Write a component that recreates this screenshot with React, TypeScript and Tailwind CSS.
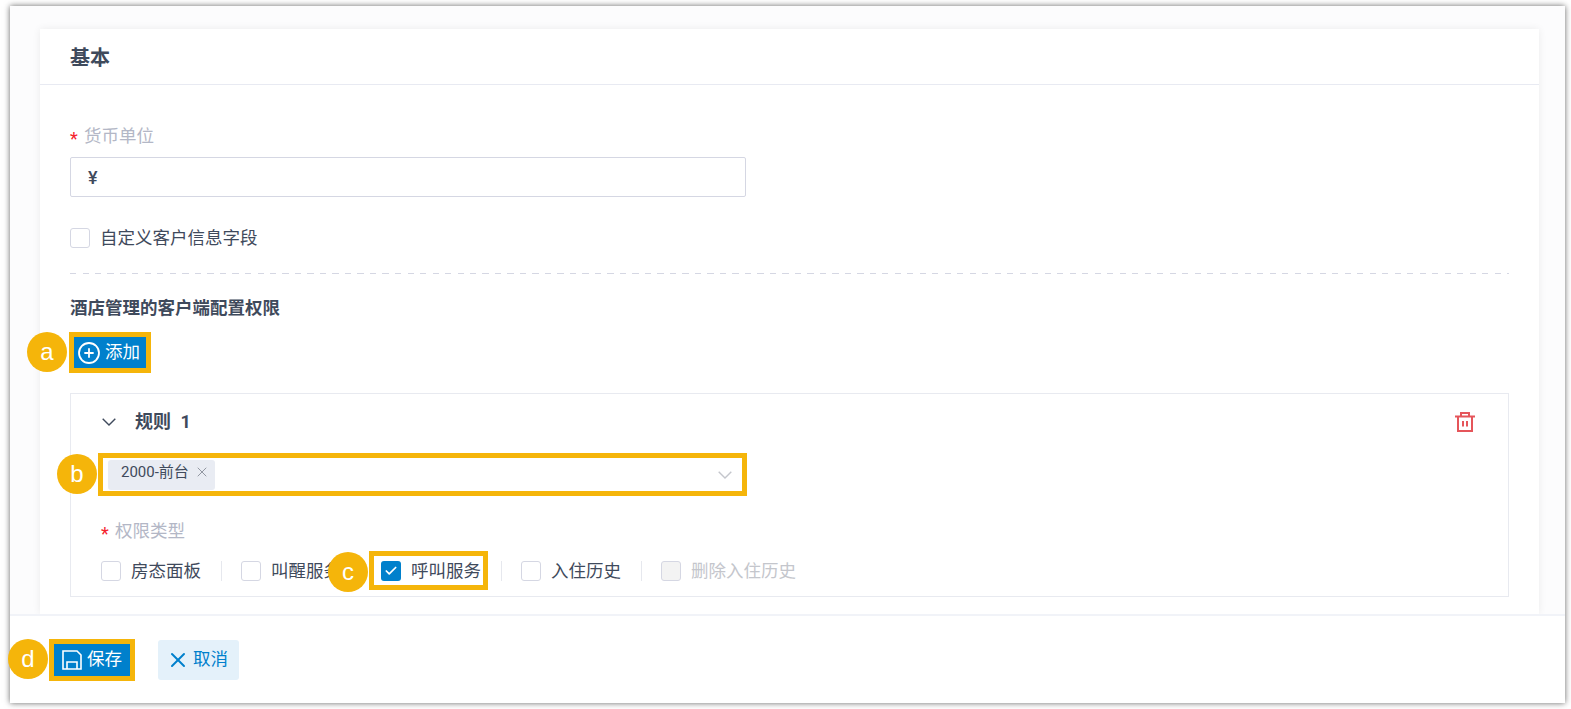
import type { JSX } from 'react';
import { Check, CirclePlus, X } from 'lucide-react';

function Callout({ letter, className }: { letter: string; className: string }): JSX.Element {
  return (
    <span
      className={`absolute z-20 flex size-10 items-center justify-center rounded-full bg-[#f5b50a] font-['Liberation_Sans',sans-serif] text-[24px] leading-none text-white ${className}`}
    >
      {letter}
    </span>
  );
}

function Caret({ className }: { className: string }): JSX.Element {
  return (
    <svg className={className} viewBox="0 0 14 8" fill="none" stroke="currentColor" strokeWidth="1.4">
      <path d="M.7.7 7 7l6.3-6.3" />
    </svg>
  );
}

function Permission({
  label,
  checked,
  disabled,
  marked,
  last,
}: {
  label: string;
  checked?: boolean;
  disabled?: boolean;
  marked?: boolean;
  last?: boolean;
}): JSX.Element {
  return (
    <div className="flex h-5 shrink-0 items-center">
      <div className="relative flex h-5 items-center gap-[10px] whitespace-nowrap">
        {marked ? (
          <span className="absolute -top-[10px] -right-[7px] -bottom-[9px] -left-[12px] border-[5px] border-[#f5b50a] bg-white" />
        ) : null}
        {checked ? (
          <span className="relative flex size-5 shrink-0 items-center justify-center rounded-[3px] bg-[#0080cc]">
            <Check className="size-[14px] text-white" strokeWidth={3} />
          </span>
        ) : (
          <span
            className={`size-5 shrink-0 rounded-[3px] border border-[#d5d7e3] ${disabled ? 'bg-[#f3f3f3]' : 'bg-white'}`}
          />
        )}
        <span className={`relative text-[17.5px] leading-5 ${disabled ? 'text-[#c4c6cc]' : 'text-[#3f4a5c]'}`}>
          {label}
        </span>
      </div>
      {!last ? <span className="mr-[19px] ml-[20px] h-5 w-px shrink-0 bg-[#e6e8ee]" /> : null}
    </div>
  );
}

export default function App(): JSX.Element {
  return (
    <div className="relative h-[709px] w-[1571px] overflow-hidden bg-white pt-[6px] pr-[6px] pb-[6px] pl-[10px] font-['Roboto','Noto_Sans_CJK_SC',sans-serif] text-[#3f4a5c]">
      <div className="flex h-full flex-col bg-white shadow-[0_0_6px_rgba(0,0,0,0.6)]">
        <div className="h-[608px] shrink-0 overflow-hidden bg-[#fcfcfd] pt-[23px] pr-[26px] pl-[30px]">
          <div className="h-full bg-white shadow-[0_0_8px_rgba(0,0,0,0.07)]">
            <div className="flex h-[56px] items-center border-b border-[#e8eaf2] pt-[2px] pl-[30px] text-[20px] font-bold">
              基本
            </div>

            <div className="pt-[39px] pr-[30px] pl-[30px]">
              <div className="flex h-6 items-center text-[17.5px] text-[#b3b7c6]">
                <span className="mr-[5px] w-[9px] pt-[4px] text-[18px] text-[#f5222d]">*</span>
                货币单位
              </div>
              <div className="mt-[9px] flex h-10 w-[676px] items-center rounded-[2px] border border-[#d5d7e3] pl-[17px] text-[18px] font-medium">
                ¥
              </div>
              <div className="mt-[31px] flex h-5 items-center gap-[10px]">
                <span className="size-5 rounded-[3px] border border-[#d5d7e3]" />
                <span className="text-[17.5px] leading-5">自定义客户信息字段</span>
              </div>
              <div className="mt-[25px] h-px bg-[repeating-linear-gradient(90deg,#d5d7e3_0_6px,transparent_6px_12.5px)]" />

              <div className="mt-[24px] h-5 text-[17.5px] leading-5 font-bold">酒店管理的客户端配置权限</div>

              <button className="mt-[19px] ml-[4px] flex h-[31px] w-[72px] items-center gap-[4px] bg-[#0080cc] pl-[3px] text-[17.5px] text-white outline-[5px] outline-[#f5b50a]">
                <CirclePlus className="size-6" strokeWidth={1.8} />
                添加
              </button>

              <div className="mt-[25px] h-[204px] border border-[#e8eaf0]">
                <div className="flex h-[55px] items-center pr-[32px] pl-[31px]">
                  <Caret className="h-2 w-[14px] text-[#3f4a5c]" />
                  <span className="ml-[19px] text-[18px] font-bold">
                    规则 <span className="ml-[5px]">1</span>
                  </span>
                  <svg className="ml-auto size-[22px] text-[#e5555a]" viewBox="0 0 22 22" fill="none" stroke="currentColor" strokeWidth="2">
                    <path d="M1 5.5h20M7 5.5V2h8v3.5M4 5.5V20h14V5.5M9 10v5.5M13 10v5.5" />
                  </svg>
                </div>

                <div className="mt-[9px] ml-[32px] flex h-[33px] w-[639px] items-center bg-white pr-[10px] pl-[5px] outline-[5px] outline-[#f5b50a]">
                  <span className="flex h-[30px] w-[107px] items-center gap-[5px] rounded-[3px] bg-[#e9ecf3] pb-[5px] pl-[13px] text-[15px] whitespace-nowrap">
                    2000-前台
                    <X className="size-[16px] text-[#8b909b]" strokeWidth={1.4} />
                  </span>
                  <Caret className="ml-auto h-2 w-[14px] text-[#c4c6cc]" />
                </div>

                <div className="mt-[28px] ml-[30px] flex h-6 items-center text-[17.5px] text-[#b3b7c6]">
                  <span className="mr-[5px] w-[9px] pt-[4px] text-[18px] text-[#f5222d]">*</span>
                  权限类型
                </div>
                <div className="mt-[18px] ml-[30px] flex">
                  <Permission label="房态面板" />
                  <Permission label="叫醒服务" />
                  <Permission label="呼叫服务" checked marked />
                  <Permission label="入住历史" />
                  <Permission label="删除入住历史" disabled last />
                </div>
              </div>
            </div>
          </div>
        </div>

        <div className="flex flex-1 items-center gap-[28px] border-t-2 border-[#f1f3f8] pl-[44px]">
          <button className="flex h-[32px] w-[76px] items-center gap-[5px] bg-[#0080cc] pl-[8px] text-[17.5px] text-white outline-[5px] outline-[#f5b50a]">
            <svg className="size-[20px]" viewBox="0 0 20 20" fill="none" stroke="currentColor" strokeWidth="1.6">
              <path d="M1 1h14l4 4v14H1zM5 19v-7h10v7" />
            </svg>
            保存
          </button>
          <button className="flex h-10 w-[81px] items-center gap-[3px] rounded-[3px] bg-[#e4f1fa] pl-[8px] text-[17.5px] text-[#0080cc]">
            <X className="size-6" strokeWidth={2} />
            取消
          </button>
        </div>
      </div>

      <Callout letter="a" className="top-[332px] left-[27px]" />
      <Callout letter="b" className="top-[454px] left-[57px]" />
      <Callout letter="c" className="top-[552px] left-[328px]" />
      <Callout letter="d" className="top-[639px] left-[8px]" />
    </div>
  );
}
